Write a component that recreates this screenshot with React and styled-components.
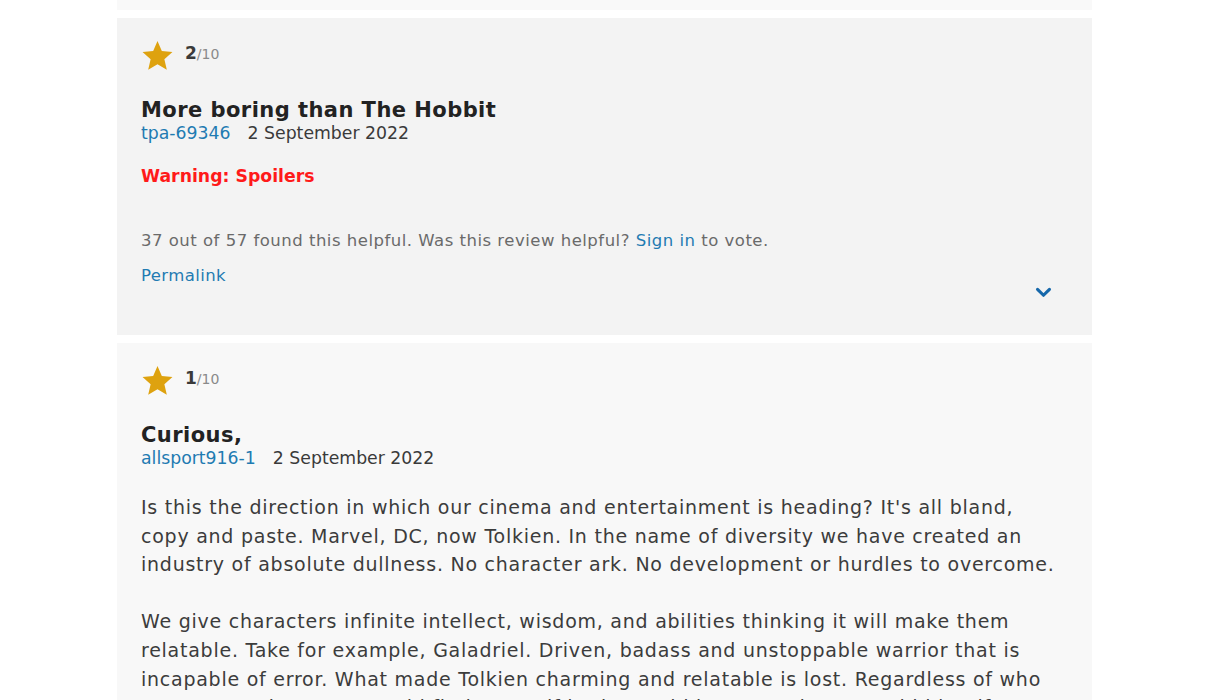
import React from 'react'
import styled, { createGlobalStyle } from 'styled-components'

const GlobalStyle = createGlobalStyle`
  body {
    margin: 0;
    background: #ffffff;
    font-family: "DejaVu Sans", Verdana, sans-serif;
    color: #333333;
  }
`

const Page = styled.div`
  width: 975px;
  margin-left: 117px;
  display: flex;
  flex-direction: column;
  gap: 8px;
`

const Card = styled.section`
  background-color: ${(p) => p.$bg};
  height: ${(p) => (p.$height ? `${p.$height}px` : 'auto')};
  padding: ${(p) => (p.$stub ? '0' : '23px 40px 0 24px')};
  box-sizing: border-box;
  display: flex;
  flex-direction: column;
  overflow: hidden;
`

const RatingRow = styled.div`
  display: flex;
  align-items: center;
  gap: 11px;
  height: 28px;
`

const Score = styled.span`
  font-size: 17px;
  font-weight: bold;
  color: #3a3a3a;
  margin-top: -4px;

  small {
    font-size: 14px;
    font-weight: normal;
    color: #8a8a8a;
  }
`

const Title = styled.h2`
  margin: 29px 0 0;
  font-size: 21px;
  line-height: 24px;
  letter-spacing: 0.45px;
  font-weight: bold;
  color: #222222;
`

const Meta = styled.div`
  display: flex;
  gap: 17px;
  font-size: 17.3px;
  line-height: 22px;
  color: #3a3a3a;
`

const Link = styled.a`
  color: #1f7bb2;
  text-decoration: none;
`

const Warning = styled.div`
  margin-top: 21px;
  font-size: 17.3px;
  line-height: 22px;
  font-weight: bold;
  color: #ff1a1a;
`

const Helpful = styled.div`
  margin-top: 43px;
  font-size: 16.5px;
  line-height: 22px;
  letter-spacing: 0.5px;
  color: #6a6a6a;
`

const Footer = styled.div`
  margin-top: 13px;
  display: flex;
  justify-content: space-between;
  align-items: flex-start;
  padding-bottom: 37px;
  font-size: 16.5px;
  letter-spacing: 0.4px;
  line-height: 22px;
`

const Chevron = styled.svg`
  margin-top: 22px;
`

const Body = styled.p`
  margin: 24px 0 0;
  font-size: 19px;
  line-height: 28.6px;
  letter-spacing: 0.75px;
  color: #3c3c3c;
  white-space: pre;
`

function Star() {
  return (
    <svg width="33" height="31" viewBox="0 0 24 23">
      <path
        d="M12 0.8l3.2 7.4 7.9 0.7-6 5.3 1.8 7.9L12 18l-6.9 4.1 1.8-7.9-6-5.3 7.9-0.7z"
        fill="#dea20f"
      />
    </svg>
  )
}

function Review({ bg, score, title, author, date, children }) {
  return (
    <Card $bg={bg}>
      <RatingRow>
        <Star />
        <Score>
          {score}
          <small>/10</small>
        </Score>
      </RatingRow>
      <Title>{title}</Title>
      <Meta>
        <Link href="#">{author}</Link>
        <span>{date}</span>
      </Meta>
      {children}
    </Card>
  )
}

const secondText = `Is this the direction in which our cinema and entertainment is heading? It's all bland,
copy and paste. Marvel, DC, now Tolkien. In the name of diversity we have created an
industry of absolute dullness. No character ark. No development or hurdles to overcome.

We give characters infinite intellect, wisdom, and abilities thinking it will make them
relatable. Take for example, Galadriel. Driven, badass and unstoppable warrior that is
incapable of error. What made Tolkien charming and relatable is lost. Regardless of who
you are or where you would find yourself in the world he created, you could identify
with the characters and their struggles.`

export default function App() {
  return (
    <>
      <GlobalStyle />
      <Page>
        <Card $bg="#f9f9f9" $height={10} $stub />
        <Review
          bg="#f3f3f3"
          score="2"
          title="More boring than The Hobbit"
          author="tpa-69346"
          date="2 September 2022"
        >
          <Warning>Warning: Spoilers</Warning>
          <Helpful>
            37 out of 57 found this helpful. Was this review helpful?{' '}
            <Link href="#">Sign in</Link> to vote.
          </Helpful>
          <Footer>
            <Link href="#">Permalink</Link>
            <Chevron width="17" height="11" viewBox="0 0 18 12">
              <polyline
                points="2.5,2.5 9,9 15.5,2.5"
                fill="none"
                stroke="#1668ab"
                strokeWidth="3.4"
                strokeLinecap="round"
                strokeLinejoin="round"
              />
            </Chevron>
          </Footer>
        </Review>
        <Review
          bg="#f8f8f8"
          score="1"
          title="Curious,"
          author="allsport916-1"
          date="2 September 2022"
        >
          <Body>{secondText}</Body>
        </Review>
      </Page>
    </>
  )
}
